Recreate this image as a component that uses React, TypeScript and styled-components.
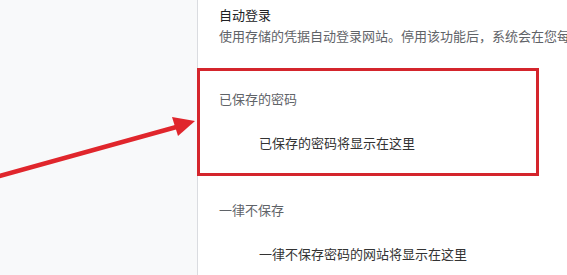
import styled, { createGlobalStyle } from "styled-components";

const GlobalStyle = createGlobalStyle`
  html, body {
    margin: 0;
    padding: 0;
    background: #ffffff;
  }
  body {
    font-family: "Noto Sans CJK SC", "Noto Sans", sans-serif;
    font-size: 13px;
  }
`

const Page = styled.div`
  position: relative;
  display: flex;
  width: 567px;
  height: 275px;
  overflow: hidden;
`

const Sidebar = styled.aside`
  flex: 0 0 197px;
  background-color: #f8f9fa;
  border-right: 1px solid #dadce0;
`

const Main = styled.main`
  flex: 1;
  min-width: 0;
  padding: 5px 0 0 21px;
  display: flex;
  flex-direction: column;
`

const Title = styled.div`
  line-height: 20px;
  color: #202124;
  white-space: nowrap;
`

const Subtitle = styled.div`
  line-height: 20px;
  margin-top: 1px;
  color: #5f6368;
  white-space: nowrap;
`

const SectionLabel = styled.div<{ $top: number }>`
  line-height: 20px;
  margin-top: ${p => p.$top}px;
  color: #5f6368;
  white-space: nowrap;
`

const EmptyNote = styled.div`
  line-height: 20px;
  margin-top: 24px;
  padding-left: 40px;
  color: #333333;
  white-space: nowrap;
`

const Highlight = styled.div`
  position: absolute;
  left: 197px;
  top: 68px;
  width: 342px;
  height: 108px;
  box-sizing: border-box;
  border: 3px solid #d4252c;
  pointer-events: none;
`

const Arrow = styled.svg`
  position: absolute;
  left: 0;
  top: 100px;
  pointer-events: none;
`

function App() {
    return (
        <>
            <GlobalStyle/>
            <Page>
                <Sidebar/>
                <Main>
                    <Title>自动登录</Title>
                    <Subtitle>使用存储的凭据自动登录网站。停用该功能后，系统会在您每</Subtitle>
                    <SectionLabel $top={43}>已保存的密码</SectionLabel>
                    <EmptyNote>已保存的密码将显示在这里</EmptyNote>
                    <SectionLabel $top={47}>一律不保存</SectionLabel>
                    <EmptyNote>一律不保存密码的网站将显示在这里</EmptyNote>
                </Main>
                <Highlight/>
                <Arrow width="200" height="90" viewBox="0 0 200 90">
                    <line x1="-4" y1="77" x2="180" y2="26" stroke="#e0262c" strokeWidth="4.5" strokeLinecap="round"/>
                    <polygon points="195,21 172,17 178,36" fill="#e0262c"/>
                </Arrow>
            </Page>
        </>
    )
}

export default App;
